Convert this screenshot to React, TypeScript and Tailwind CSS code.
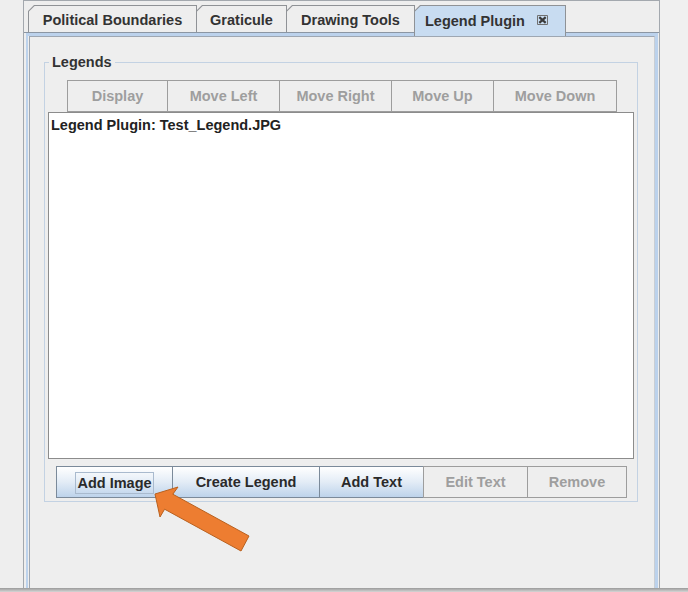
import React from 'react';

const font = "font-['Liberation_Sans',Arial,sans-serif]";

type Btn = { label: string; w: string; enabled?: boolean; focused?: boolean };

const topButtons: Btn[] = [
  { label: 'Display', w: 'w-[101px]' },
  { label: 'Move Left', w: 'w-[113px]' },
  { label: 'Move Right', w: 'w-[113px]' },
  { label: 'Move Up', w: 'w-[103px]' },
  { label: 'Move Down', w: 'w-[124px]' },
];

const bottomButtons: Btn[] = [
  { label: 'Add Image', w: 'w-[117px]', enabled: true, focused: true },
  { label: 'Create Legend', w: 'w-[148px]', enabled: true },
  { label: 'Add Text', w: 'w-[105px]', enabled: true },
  { label: 'Edit Text', w: 'w-[105px]' },
  { label: 'Remove', w: 'w-[100px]' },
];

const tabs = [
  { label: 'Political Boundaries', w: 'w-[169px]' },
  { label: 'Graticule', w: 'w-[91px]' },
  { label: 'Drawing Tools', w: 'w-[129px]' },
];

function CloseIcon() {
  return (
    <svg width="13" height="12" viewBox="0 0 13 12">
      <path d="M1.5 1.5h10v9h-10z" fill="none" stroke="#707070" />
      <path d="M3.3 3.2l6.4 5.6M9.7 3.2l-6.4 5.6" stroke="#3a3a3a" strokeWidth="2.2" />
    </svg>
  );
}

function Tab({ label, w }: { label: string; w: string }) {
  return (
    <div
      className={`${w} -ml-px first:ml-0 h-[27px] bg-[#8f9296] pt-px px-px [clip-path:polygon(6px_0,100%_0,100%_100%,0_100%,0_6px)]`}
    >
      <div className="h-full bg-[#eeeeee] flex items-center justify-center pt-[3px] text-[#333333] [clip-path:polygon(5.6px_0,100%_0,100%_100%,0_100%,0_5.6px)]">
        {label}
      </div>
    </div>
  );
}

function Button({ label, w, enabled, focused }: Btn) {
  const look = enabled
    ? 'border-[#7b8a9a] bg-gradient-to-b from-[#ffffff] via-[#e3ecf6] to-[#bdd3eb] text-[#2a2a2a]'
    : 'border-[#9d9d9d] bg-[#eeeeee] text-[#9e9e9e]';
  return (
    <div
      className={`${w} h-[32px] -ml-px first:ml-0 border flex items-center justify-center pt-[2px] ${look}`}
    >
      {focused ? (
        <span className="border border-[#a9bace] px-px leading-[20px]">{label}</span>
      ) : (
        label
      )}
    </div>
  );
}

export default function App() {
  return (
    <div
      className={`relative w-[688px] h-[592px] overflow-hidden bg-[#eeeeee] ${font} text-[14.5px] font-bold`}
    >
      <div className="flex h-[588px]">
        <div className="w-[23px]" />
        <div className="w-[637px] flex flex-col border-x border-t border-[#a3a8ae]">
          {/* tab strip */}
          <div className="h-[31px] flex items-end pl-[4px]">
            {tabs.map((t) => (
              <Tab key={t.label} {...t} />
            ))}
            <div className="relative z-10 -ml-px w-[152px] h-[31px] -mb-[4px] bg-[#8f9296] pt-px px-px [clip-path:polygon(6px_0,100%_0,100%_100%,0_100%,0_6px)]">
              <div className="h-full bg-[#c8dcf1] flex items-start pt-[5px] pl-[10px] gap-[11px] text-[#333333] [clip-path:polygon(5.6px_0,100%_0,100%_100%,0_100%,0_5.6px)]">
                <span>Legend Plugin</span>
                <span className="pt-[3px]">
                  <CloseIcon />
                </span>
              </div>
            </div>
          </div>

          {/* tab content pane */}
          <div className="flex-1 flex flex-col border-t border-[#8b96a3] pl-[2px] pr-px">
            <div className="flex-1 flex flex-col border-l-2 border-r-[3px] border-t-[3px] border-[#bcd2ec] pl-px">
              <div className="flex-1 border-l border-t border-[#9ea7b2] border-r border-r-[#c9ced4]">
                <fieldset className="mt-[16px] ml-[14px] w-[594px] border border-[#c3d2e3] px-[3px] pb-[3px]">
                  <legend className="ml-px px-[3px] leading-[18px] text-[#333333]">Legends</legend>
                  <div className="mt-[9px] flex pl-[19px]">
                    {topButtons.map((b) => (
                      <Button key={b.label} {...b} />
                    ))}
                  </div>
                  <div className="h-[347px] bg-white border border-[#8c8c8c] pl-[2px] pt-[4px] leading-[17px] text-[#222222]">
                    Legend Plugin: Test_Legend.JPG
                  </div>
                  <div className="mt-[7px] flex pl-[8px]">
                    {bottomButtons.map((b) => (
                      <Button key={b.label} {...b} />
                    ))}
                  </div>
                </fieldset>
              </div>
            </div>
          </div>
        </div>
        <div className="flex-1 bg-[#f0f0f0]" />
      </div>
      <div className="h-[4px] bg-gradient-to-b from-[#9a9a9a] to-[#d6d6d6]" />

      {/* callout arrow */}
      <svg
        className="absolute inset-0 pointer-events-none"
        width="688"
        height="592"
        viewBox="0 0 688 592"
      >
        <polygon
          points="155,494 178,487 172.8,494.2 249,536 241,551 164.6,509.2 160,517"
          fill="#ed7d31"
          stroke="#b9611f"
          strokeWidth="1"
          strokeLinejoin="round"
        />
      </svg>
    </div>
  );
}
